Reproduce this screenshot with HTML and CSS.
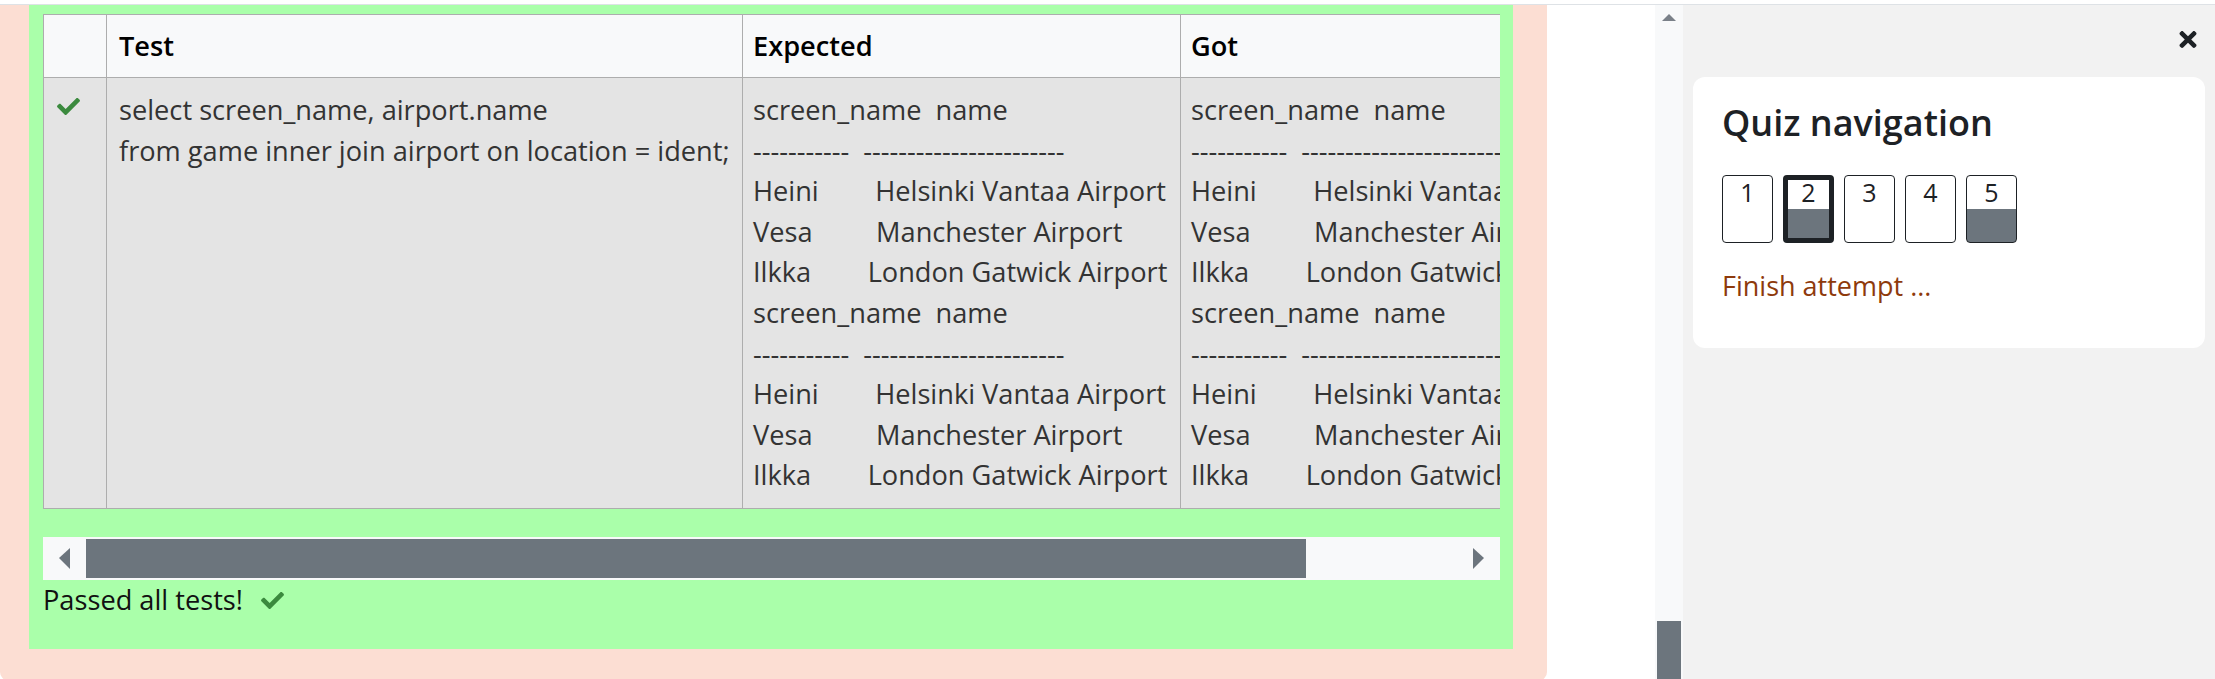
FILE: index.html
```html
<!DOCTYPE html>
<html lang="en">
<head>
<meta charset="utf-8">
<title>Quiz attempt</title>
<link rel="stylesheet" href="styles.css">
</head>
<body>
<div class="topbar"></div>
<div class="layout">
  <main class="main">
    <div class="que">
      <div class="outcome">
        <div class="tablewrap">
          <table class="results">
            <thead>
              <tr>
                <th class="c1"></th>
                <th class="c2">Test</th>
                <th class="c3">Expected</th>
                <th class="c4">Got</th>
              </tr>
            </thead>
            <tbody>
              <tr>
                <td class="c1"><svg class="tick" viewBox="0 67 512 380" width="23" height="17" aria-hidden="true"><path d="M173.9 439.4l-166.4-166.4c-10-10-10-26.2 0-36.2l36.2-36.2c10-10 26.2-10 36.2 0L192 312.7 432.1 72.6c10-10 26.2-10 36.2 0l36.2 36.2c10 10 10 26.2 0 36.2l-294.4 294.4c-10 10-26.2 10-36.2 0z"/></svg></td>
                <td class="c2"><div class="pre">select screen_name, airport.name
from game inner join airport on location = ident;</div></td>
                <td class="c3"><div class="pre">screen_name  name
-----------  -----------------------
Heini        Helsinki Vantaa Airport
Vesa         Manchester Airport
Ilkka        London Gatwick Airport
screen_name  name
-----------  -----------------------
Heini        Helsinki Vantaa Airport
Vesa         Manchester Airport
Ilkka        London Gatwick Airport</div></td>
                <td class="c4"><div class="pre">screen_name  name
-----------  -----------------------
Heini        Helsinki Vantaa Airport
Vesa         Manchester Airport
Ilkka        London Gatwick Airport
screen_name  name
-----------  -----------------------
Heini        Helsinki Vantaa Airport
Vesa         Manchester Airport
Ilkka        London Gatwick Airport</div></td>
              </tr>
            </tbody>
          </table>
        </div>
        <div class="hscroll">
          <span class="sbtn"><i class="tri-left"></i></span>
          <div class="hthumb"></div>
          <div class="hspacer"></div>
          <span class="sbtn"><i class="tri-right"></i></span>
        </div>
        <p class="passed">Passed all tests! <svg class="tick" viewBox="0 67 512 380" width="23" height="17" aria-hidden="true"><path d="M173.9 439.4l-166.4-166.4c-10-10-10-26.2 0-36.2l36.2-36.2c10-10 26.2-10 36.2 0L192 312.7 432.1 72.6c10-10 26.2-10 36.2 0l36.2 36.2c10 10 10 26.2 0 36.2l-294.4 294.4c-10 10-26.2 10-36.2 0z"/></svg></p>
      </div>
    </div>
  </main>
  <div class="vscroll">
    <div class="vup"><i class="tri-up"></i></div>
    <div class="vspacer"></div>
    <div class="vthumb"></div>
  </div>
  <aside class="drawer">
    <div class="drawer-header">
      <svg class="close" viewBox="0 80 352 352" width="18" height="17" aria-hidden="true"><path d="M242.7 256l100.1-100.1c12.3-12.3 12.3-32.2 0-44.5l-22.2-22.2c-12.3-12.3-32.2-12.3-44.5 0L176 189.3 75.9 89.2c-12.3-12.3-32.2-12.3-44.5 0L9.2 111.4c-12.3 12.3-12.3 32.2 0 44.5L109.3 256 9.2 356.1c-12.3 12.3-12.3 32.2 0 44.5l22.2 22.2c12.3 12.3 32.2 12.3 44.5 0L176 322.7l100.1 100.1c12.3 12.3 32.2 12.3 44.5 0l22.2-22.2c12.3-12.3 12.3-32.2 0-44.5L242.7 256z"/></svg>
    </div>
    <section class="card">
      <h3 class="card-title">Quiz navigation</h3>
      <div class="qnbuttons">
        <span class="qn">1</span>
        <span class="qn current answered">2</span>
        <span class="qn">3</span>
        <span class="qn">4</span>
        <span class="qn answered">5</span>
      </div>
      <a class="finish" href="#">Finish attempt ...</a>
    </section>
  </aside>
</div>
</body>
</html>
```
FILE: styles.css
```css
* { box-sizing: border-box; }
html, body { margin: 0; padding: 0; }
body {
  width: 2215px;
  height: 679px;
  overflow: hidden;
  background: #fff;
  font-family: "Open Sans", "Noto Sans", sans-serif;
  color: #1d2125;
}
.topbar {
  height: 5px;
  background: #fff;
  border-bottom: 1px solid #dee2e6;
}
.layout {
  display: flex;
  height: 674px;
}
.main {
  width: 1655px;
  flex: none;
  overflow: hidden;
  background: #fff;
}
.que {
  width: 1547px;
  background: #fcded3;
  padding: 0 34px 32px 29px;
  border-radius: 0 0 9px 9px;
}
.outcome {
  background: #aaffaa;
  padding: 9px 13px 28px 14px;
}
.tablewrap {
  width: 1457px;
  overflow: hidden;
  margin-bottom: 28px;
}
.results {
  border-collapse: separate;
  border-spacing: 0;
  table-layout: fixed;
  width: 1638px;
  border-top: 1px solid #adadad;
  border-left: 1px solid #adadad;
  font-size: 27.2px;
}
.results th, .results td {
  border-right: 1px solid #adadad;
  border-bottom: 1px solid #adadad;
  padding: 12px;
  vertical-align: top;
  text-align: left;
}
.results th {
  background: #f8f9fa;
  color: #000;
  font-weight: 600;
  line-height: 38px;
}
.results td {
  background: #e4e4e4;
  color: #333;
  line-height: 40.6px;
}
.results .c1 { width: 63px; }
.results .c2 { width: 636px; }
.results .c3 { width: 438px; padding-left: 10px; }
.results .c4 { width: 500px; padding-left: 10px; }
.pre { white-space: pre; }
.tick { fill: #3b8a3e; }
.results td .tick { display: block; margin: 8px 0 0 1px; }

.hscroll {
  display: flex;
  height: 43px;
  background: #f8f9fa;
}
.sbtn {
  width: 43px;
  flex: none;
  display: flex;
  align-items: center;
  justify-content: center;
}
.tri-left, .tri-right {
  width: 0;
  height: 0;
  border-top: 10px solid transparent;
  border-bottom: 11px solid transparent;
}
.tri-left { border-right: 11px solid #6c757d; }
.tri-right { border-left: 11px solid #6c757d; }
.hthumb {
  width: 1220px;
  flex: none;
  margin: 2px 0;
  background: #6c757d;
}
.hspacer { flex: 1; }
.passed {
  margin: 0;
  display: flex;
  align-items: center;
  gap: 11px;
  font-size: 27.2px;
  line-height: 40.6px;
  color: #111;
  white-space: pre;
}

.vscroll {
  width: 28px;
  flex: none;
  background: #f8f9fa;
  display: flex;
  flex-direction: column;
  align-items: center;
}
.vup {
  height: 25px;
  display: flex;
  align-items: center;
}
.tri-up {
  width: 0;
  height: 0;
  border-left: 7px solid transparent;
  border-right: 7px solid transparent;
  border-bottom: 7px solid #7a8088;
}
.vspacer { flex: 1; }
.vthumb {
  width: 24px;
  height: 58px;
  background: #6c757d;
}

.drawer {
  flex: 1;
  background: #f2f2f2;
  padding: 0 10px;
}
.drawer-header {
  height: 72px;
  display: flex;
  justify-content: flex-end;
  align-items: flex-start;
  padding: 26px 8px 0 0;
}
.close { fill: #1d2125; }
.card {
  background: #fff;
  border-radius: 12px;
  padding: 25px 29px 41px;
}
.card-title {
  margin: 0;
  font-size: 36px;
  font-weight: 600;
  line-height: 42px;
  color: #1d2125;
}
.qnbuttons {
  display: flex;
  gap: 10px;
  margin-top: 31px;
}
.qn {
  width: 51px;
  height: 68px;
  border: 1px solid #1d2125;
  border-radius: 4px;
  background: #fff;
  font-size: 25px;
  line-height: 32px;
  text-align: center;
  color: #1d2125;
}
.qn.answered {
  background: linear-gradient(#fff 34px, #6c757d 34px) border-box;
}
.qn.current {
  border-width: 5px;
  line-height: 24px;
}
.finish {
  display: block;
  margin-top: 23px;
  font-size: 27px;
  line-height: 40.6px;
  color: #8e3a0c;
  text-decoration: none;
}
```
